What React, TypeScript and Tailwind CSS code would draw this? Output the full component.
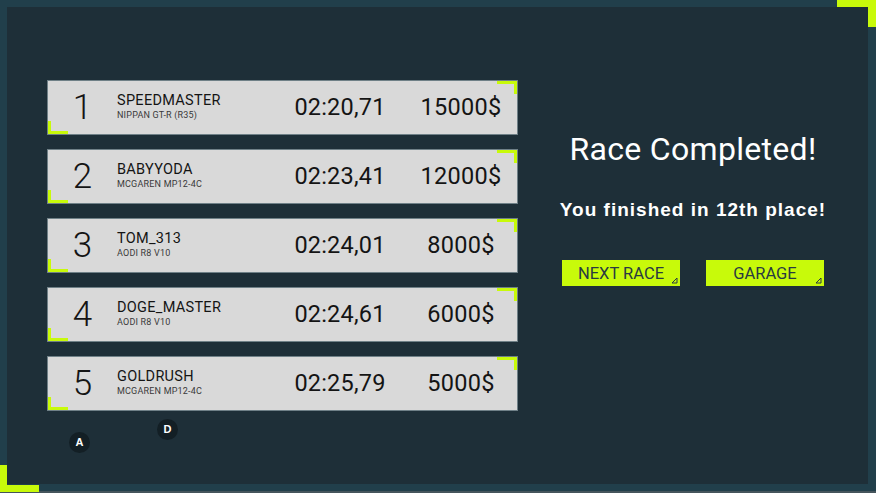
import React from "react";

const rows = [
  { pos: 1, name: "SPEEDMASTER", car: "NIPPAN GT-R (R35)", time: "02:20,71", money: "15000$" },
  { pos: 2, name: "BABYYODA", car: "MCGAREN MP12-4C", time: "02:23,41", money: "12000$" },
  { pos: 3, name: "TOM_313", car: "AODI R8 V10", time: "02:24,01", money: "8000$" },
  { pos: 4, name: "DOGE_MASTER", car: "AODI R8 V10", time: "02:24,61", money: "6000$" },
  { pos: 5, name: "GOLDRUSH", car: "MCGAREN MP12-4C", time: "02:25,79", money: "5000$" },
];

function Row({ r }: { r: (typeof rows)[number] }) {
  return (
    <div className="relative flex items-center h-[55px] w-[471px] bg-[#d9d9d9] border border-[#6f8087] text-[#141414]">
      <div className="absolute left-0 bottom-0 w-[20px] h-[3px] bg-[#c8fa0a]" />
      <div className="absolute left-0 bottom-0 w-[3px] h-[13px] bg-[#c8fa0a]" />
      <div className="absolute right-0 top-0 w-[20px] h-[3px] bg-[#c8fa0a]" />
      <div className="absolute right-0 top-0 w-[3px] h-[13px] bg-[#c8fa0a]" />
      <div className="shrink-0 w-[69px] text-center text-[35px] leading-none font-light">{r.pos}</div>
      <div className="shrink-0 w-[168px] flex flex-col -mt-[2px]">
        <div className="text-[14.5px] leading-[17px] tracking-[0.3px]">{r.name}</div>
        <div className="text-[9px] leading-[11px] text-[#3a3a3a] mt-[1px] tracking-[0.2px]">{r.car}</div>
      </div>
      <div className="shrink-0 w-[110px] text-center text-[23.5px] leading-none tracking-[0.2px]">{r.time}</div>
      <div className="shrink-0 w-[122px] pl-[10px] text-center text-[23.5px] leading-none tracking-[0.3px]">{r.money}</div>
    </div>
  );
}

function Btn({ label }: { label: string }) {
  return (
    <div className="relative flex items-center justify-center w-[118px] h-[26px] pt-[2px] bg-[#c8fa0a] text-[#2a3a42] text-[16.5px] leading-none">
      {label}
      <svg className="absolute right-[2px] bottom-[2px]" width="7" height="7" viewBox="0 0 7 7">
        <path d="M6 1 L6 6 L1 6 Z" fill="none" stroke="#2a3a42" strokeWidth="1" />
      </svg>
    </div>
  );
}

export default function App() {
  return (
    <div
      className="relative w-[876px] h-[493px] bg-[#213f4b] pt-[7px] pl-[7px] pr-[8px] pb-[9px]"
      style={{ fontFamily: "Roboto, 'Noto Sans', sans-serif" }}
    >
      <div className="relative flex h-full bg-[#1e2f38] pl-[40px] pt-[73px]">
        <div className="flex flex-col gap-[14px]">
          {rows.map((r) => (
            <Row key={r.pos} r={r} />
          ))}
        </div>
        <div className="flex-1 flex flex-col items-center">
          <div className="mt-[51px] text-white text-[32px] leading-[36px] tracking-[0.3px]">Race Completed!</div>
          <div
            className="mt-[32px] text-white text-[19px] leading-[22px] font-bold tracking-[1px]"
            style={{ fontFamily: "'Liberation Sans', Arial, sans-serif" }}
          >
            You finished in 12th place!
          </div>
          <div className="mt-[39px] flex gap-[26px]">
            <Btn label="NEXT RACE" />
            <Btn label="GARAGE" />
          </div>
        </div>
        <div
          className="absolute left-[62px] top-[425px] w-[21px] h-[21px] rounded-full bg-[#131f25] flex items-center justify-center text-white text-[11px] font-bold"
          style={{ fontFamily: "'Liberation Sans', Arial, sans-serif" }}
        >
          A
        </div>
        <div
          className="absolute left-[150px] top-[412px] w-[21px] h-[21px] rounded-full bg-[#131f25] flex items-center justify-center text-white text-[11px] font-bold"
          style={{ fontFamily: "'Liberation Sans', Arial, sans-serif" }}
        >
          D
        </div>
      </div>
      <div className="absolute left-0 right-0 bottom-0 h-[2px] bg-[#45555c]" />
      <div className="absolute right-0 top-0 w-[39px] h-[7px] bg-[#c8fa0a]" />
      <div className="absolute right-0 top-0 w-[8px] h-[27px] bg-[#c8fa0a]" />
      <div className="absolute left-0 bottom-[1px] w-[39px] h-[7px] bg-[#c8fa0a]" />
      <div className="absolute left-0 bottom-[1px] w-[7px] h-[27px] bg-[#c8fa0a]" />
    </div>
  );
}
